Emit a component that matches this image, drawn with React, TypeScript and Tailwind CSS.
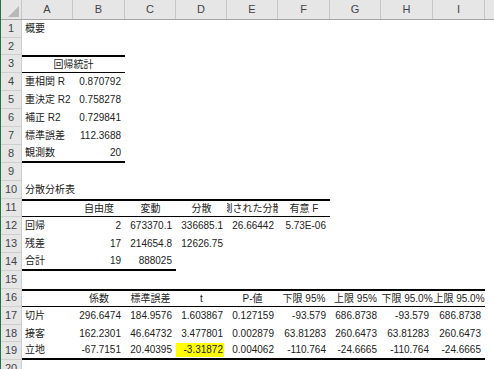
type Cell = { v?: string; a?: 'l' | 'r' | 'c'; w?: string; bg?: string };
type Row = { h: string; cells: Cell[]; top?: number; bottom?: number; span?: number };

const COLS = ['A', 'B', 'C', 'D', 'E', 'F', 'G', 'H', 'I'];
const WIDTHS = ['w-[51px]', 'w-[52px]', 'w-[51px]', 'w-[51px]', 'w-[51px]', 'w-[52px]', 'w-[51px]', 'w-[52px]', 'w-[52px]'];

const L = (v: string): Cell => ({ v, a: 'l' });
const R = (v: string): Cell => ({ v, a: 'r' });
const C = (v: string): Cell => ({ v, a: 'c' });
const E: Cell = {};

const rows: Row[] = [
  { h: 'h-[18px]', cells: [L('概要')] },
  { h: 'h-[17px]', cells: [] },
  { h: 'h-[18px]', cells: [{ v: '回帰統計', a: 'c', w: 'w-[103px]' }], top: 2, bottom: 1, span: 1 },
  { h: 'h-[18px]', cells: [L('重相関 R'), R('0.870792')] },
  { h: 'h-[18px]', cells: [L('重決定 R2'), R('0.758278')] },
  { h: 'h-[18px]', cells: [L('補正 R2'), R('0.729841')] },
  { h: 'h-[18px]', cells: [L('標準誤差'), R('112.3688')] },
  { h: 'h-[18px]', cells: [L('観測数'), R('20')], bottom: 2, span: 2 },
  { h: 'h-[18px]', cells: [] },
  { h: 'h-[18px]', cells: [L('分散分析表')] },
  { h: 'h-[18px]', cells: [E, C('自由度'), C('変動'), C('分散'), C('観測された分散比'), C('有意 F')], top: 2, bottom: 1, span: 6 },
  { h: 'h-[18px]', cells: [L('回帰'), R('2'), R('673370.1'), R('336685.1'), R('26.66442'), R('5.73E-06')] },
  { h: 'h-[18px]', cells: [L('残差'), R('17'), R('214654.8'), R('12626.75')] },
  { h: 'h-[18px]', cells: [L('合計'), R('19'), R('888025')], bottom: 2, span: 6 },
  { h: 'h-[18px]', cells: [] },
  {
    h: 'h-[18px]',
    cells: [E, C('係数'), C('標準誤差'), C('t'), C('P-値'), C('下限 95%'), C('上限 95%'), C('下限 95.0%'), C('上限 95.0%')],
    top: 2,
    bottom: 1,
    span: 9,
  },
  { h: 'h-[18px]', cells: [L('切片'), R('296.6474'), R('184.9576'), R('1.603867'), R('0.127159'), R('-93.579'), R('686.8738'), R('-93.579'), R('686.8738')] },
  { h: 'h-[17px]', cells: [L('接客'), R('162.2301'), R('46.64732'), R('3.477801'), R('0.002879'), R('63.81283'), R('260.6473'), R('63.81283'), R('260.6473')] },
  {
    h: 'h-[18px]',
    cells: [L('立地'), R('-67.7151'), R('20.40395'), { v: '-3.31872', a: 'r', bg: 'bg-[#ffff00]' }, R('0.004062'), R('-110.764'), R('-24.6665'), R('-110.764'), R('-24.6665')],
    bottom: 2,
    span: 9,
  },
  { h: 'h-[18px]', cells: [] },
];

function SheetRow({ row, n }: { row: Row; n: number }) {
  const widths: string[] = [];
  let col = 0;
  row.cells.forEach((c) => {
    widths.push(c.w ?? WIDTHS[col]);
    col += c.w ? 2 : 1;
  });
  const borderCount = row.span ?? 0;
  return (
    <div className={`flex ${row.h}`}>
      <div className="w-[21px] shrink-0 bg-[#e6e6e6] border-r border-b border-[#cfcfcf] flex items-center justify-center text-[11px] text-[#444]">
        {n}
      </div>
      {row.cells.map((c, i) => {
        const inRange = i < borderCount;
        const t = inRange && row.top === 2 ? 'border-t-2 border-t-black' : '';
        const b = inRange && row.bottom === 2 ? 'border-b-2 border-b-black' : inRange && row.bottom === 1 ? 'border-b border-b-black' : '';
        const just =
          c.a === 'r'
            ? 'justify-end pr-[3px] overflow-hidden'
            : c.a === 'c'
              ? 'justify-center overflow-hidden'
              : 'justify-start pl-[2px] overflow-visible';
        return (
          <div key={i} className={`${widths[i]} shrink-0 flex items-center whitespace-nowrap ${just} ${t} ${b}`}>
            {c.v && (
              <span className={`px-[1px] leading-none py-[2px] ${c.bg ?? ''} ${c.bg ? 'w-full text-right' : ''}`}>{c.v}</span>
            )}
          </div>
        );
      })}
    </div>
  );
}

export default function App() {
  return (
    <div
      className="w-[494px] h-[369px] overflow-hidden bg-white border-l border-[#217346] text-[10px] text-[#222]"
      style={{ fontFamily: '"Liberation Sans", "Noto Sans CJK JP", sans-serif' }}
    >
      {/* column headers */}
      <div className="flex h-[20px] bg-[#e6e6e6] border-b border-[#a6a6a6]">
        <div className="w-[21px] shrink-0 border-r border-[#c6c6c6]">
          <svg width="21" height="19" className="block">
            <polygon points="7,17 18,17 18,6" fill="#b8b8b8" />
          </svg>
        </div>
        {COLS.map((c, i) => (
          <div key={c} className={`${WIDTHS[i]} shrink-0 border-r border-[#c6c6c6] flex items-center justify-center text-[11px] text-[#444]`}>
            {c}
          </div>
        ))}
        <div className="flex-1" />
      </div>
      {rows.map((r, i) => (
        <SheetRow key={i} row={r} n={i + 1} />
      ))}
    </div>
  );
}
